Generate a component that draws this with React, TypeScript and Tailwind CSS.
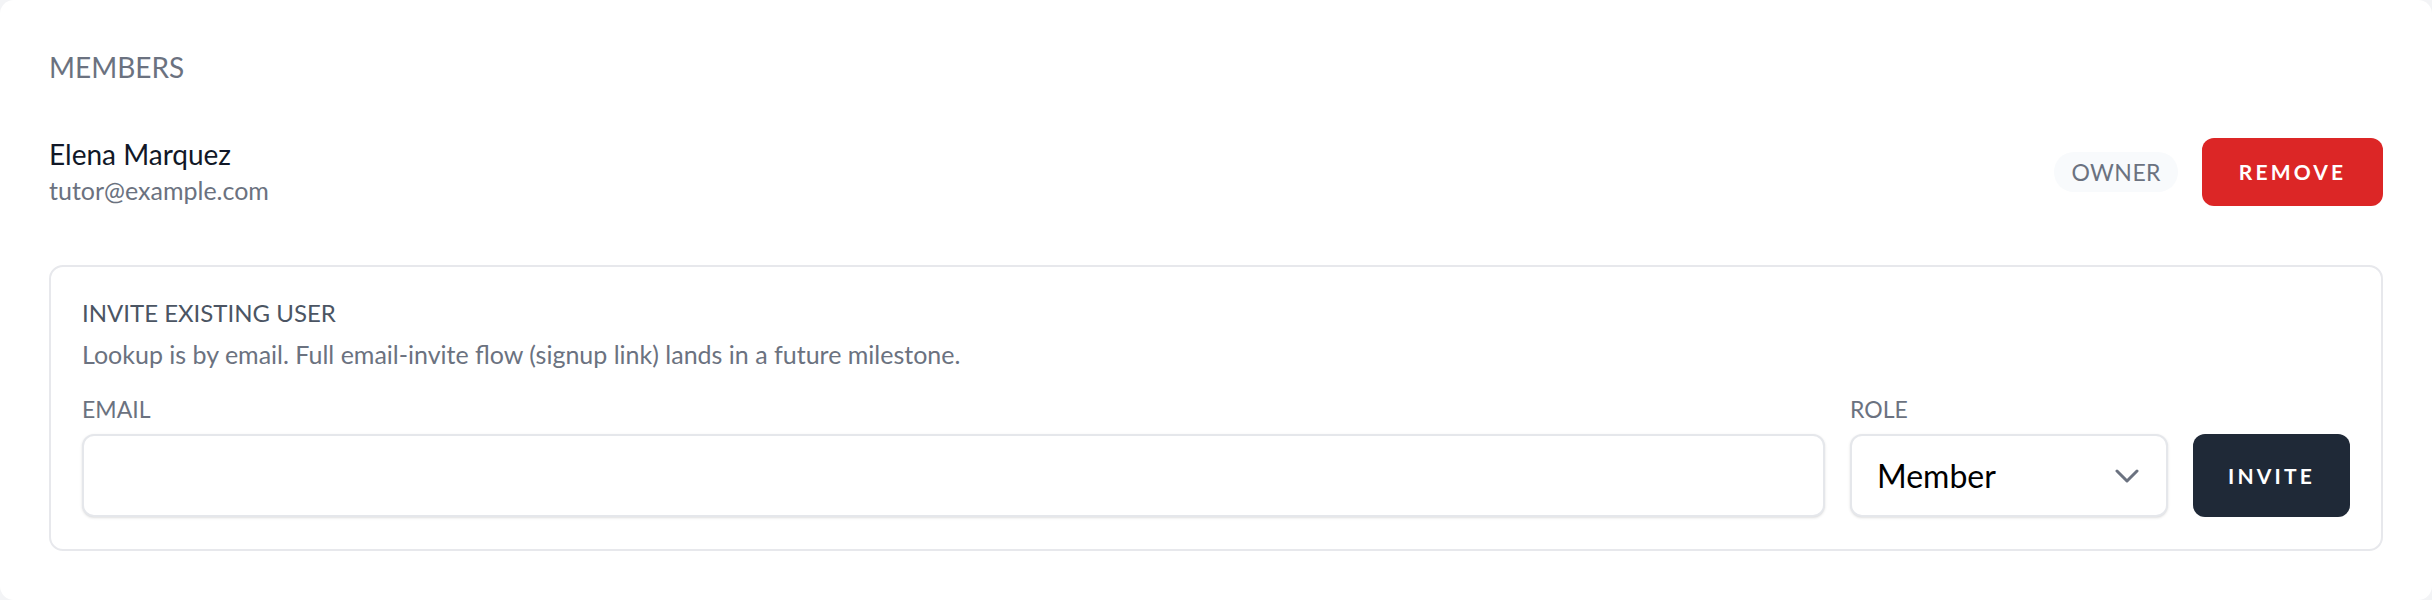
import React from 'react';

const ChevronDown = () => (
  <svg width="24" height="14" viewBox="0 0 24 14" fill="none" className="pointer-events-none absolute right-[29px] top-1/2 -translate-y-1/2">
    <path d="M2 2l10 10L22 2" stroke="#6b7280" strokeWidth="3" strokeLinecap="round" strokeLinejoin="round" />
  </svg>
);

export default function App() {
  return (
    <div className="min-h-screen bg-[#f3f4f6] font-['Lato','Noto_Sans',sans-serif]">
      <div className="h-[600px] rounded-[14px] bg-white px-[49px] pt-[48px]">
        {/* Section title */}
        <h2 className="text-[28px] leading-[38px] text-[#6b7280]">MEMBERS</h2>

        {/* Member row */}
        <div className="mt-[50px] flex h-[72px] items-center justify-between">
          <div>
            <div className="text-[28px] leading-[36px] text-[#111827]">Elena Marquez</div>
            <div className="text-[25px] leading-[36px] text-[#6b7280]">tutor@example.com</div>
          </div>
          <div className="flex items-center gap-[24px]">
            <span className="rounded-full bg-[#f8fafc] px-[17px] py-[6px] text-[23px] leading-[28px] tracking-[0.02em] text-[#6b7280]">
              OWNER
            </span>
            <button className="h-[68px] w-[181px] rounded-[12px] bg-[#dc2626] text-[21px] font-bold tracking-[0.15em] text-white">
              REMOVE
            </button>
          </div>
        </div>

        {/* Invite box */}
        <div className="mt-[57px] rounded-[14px] border-2 border-[#e7e8ec] px-[31px] pt-[31px] pb-[32px]">
          <div className="text-[24px] leading-[30px] text-[#4b5563]">INVITE EXISTING USER</div>
          <p className="mt-[10px] text-[25px] leading-[32px] text-[#6b7280]">
            Lookup is by email. Full email-invite flow (signup link) lands in a future milestone.
          </p>
          <div className="mt-[24px] flex items-end gap-[25px]">
            <label className="flex flex-1 flex-col">
              <span className="mb-[10px] text-[23px] leading-[30px] text-[#6b7280]">EMAIL</span>
              <input
                type="email"
                className="h-[83px] w-full rounded-[12px] border-2 border-[#e5e7eb] bg-white px-[24px] text-[24px] shadow-sm outline-none"
              />
            </label>
            <label className="flex w-[318px] flex-col">
              <span className="mb-[10px] text-[23px] leading-[30px] text-[#6b7280]">ROLE</span>
              <div className="relative">
                <select
                  defaultValue="member"
                  className="h-[83px] w-full appearance-none rounded-[12px] border-2 border-[#e5e7eb] bg-white pl-[25px] text-[32px] text-black shadow-sm outline-none"
                >
                  <option value="member">Member</option>
                  <option value="owner">Owner</option>
                </select>
                <ChevronDown />
              </div>
            </label>
            <button className="h-[83px] w-[157px] rounded-[12px] bg-[#1f2937] text-[21px] font-bold tracking-[0.15em] text-white">
              INVITE
            </button>
          </div>
        </div>
      </div>
    </div>
  );
}
